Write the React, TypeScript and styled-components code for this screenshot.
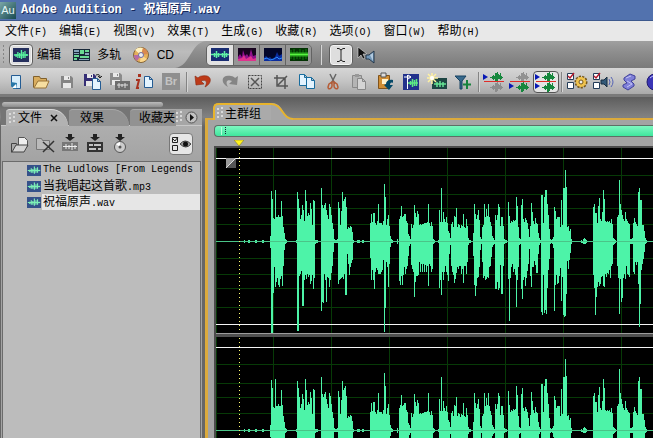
import React from "react";
import styled, { createGlobalStyle, css } from "styled-components";

const Global = createGlobalStyle`
  * { box-sizing: border-box; }
  html, body, #root { height: 100%; }
  body { margin: 0; overflow: hidden; background: #666; }
  body, button { font-family: "Liberation Sans", "Noto Sans CJK SC", sans-serif; font-size: 12px; color: #000; }
  button { border: 0; margin: 0; padding: 0; background: none; }
  svg { display: block; flex: none; }
`;

const Window = styled.div`
  height: 100vh;
  display: flex;
  flex-direction: column;
  overflow: hidden;
`;

const TitleBar = styled.header`
  flex: none;
  height: 21px;
  display: flex;
  align-items: center;
  gap: 5px;
  background: #5272ae;
  border-bottom: 1px solid #3c588d;
`;
const Title = styled.h1`
  margin: 0;
  color: #fff;
  white-space: pre;
  font: bold 12px/18px "Liberation Mono", "Noto Sans CJK SC", monospace;
  text-shadow: 1px 1px 0 #16295c;
`;

const MenuBar = styled.nav`
  flex: none;
  height: 20px;
  display: flex;
  gap: 12px;
  padding-left: 5px;
  background: #e8e8e8;
`;
const MenuButton = styled.button`
  flex: none;
  line-height: 20px;
  white-space: nowrap;
  display: flex;
  align-items: baseline;
`;
const Latin = styled.span`
  font-family: "Liberation Mono", monospace;
  font-size: 10px;
  white-space: pre;
`;

const ModeBar = styled.div`
  flex: none;
  height: 27px;
  display: flex;
  background: linear-gradient(#a0a0a0, #8e8e8e 40%, #7a7a7a);
`;
const Modes = styled.div`
  flex: none;
  display: flex;
  align-items: center;
  gap: 12px;
  padding-left: 2px;
  width: 175px;
  background: linear-gradient(#b2b2b2, #bcbcbc 40%, #a9a9a9);
`;
const ModeButton = styled.button`
  display: flex;
  align-items: center;
  gap: 4px;
  line-height: 22px;
`;
const Framed = styled.span<{ $on?: boolean }>`
  display: flex;
  align-items: center;
  justify-content: center;
  height: 22px;
  width: 24px;
  border-radius: 4px;
  ${(p) => p.$on && css`border: 1px solid #5e5e5e; background: #dedede; box-shadow: inset 0 0 0 1px #f4f4f4;`}
`;
const ModeGrip = styled.span`
  display: flex;
  align-items: center;
  gap: 4px;
`;
const ViewGroup = styled.div`
  flex: none;
  align-self: center;
  height: 22px;
  display: flex;
  border: 1px solid #636363;
  border-radius: 5px;
  overflow: hidden;
`;
const ViewButton = styled.button<{ $on?: boolean }>`
  width: 26px;
  display: flex;
  align-items: center;
  justify-content: center;
  background: ${(p) => (p.$on ? "#e2e2e2" : "#969696")};
  & + & { border-left: 1px solid #636363; }
`;
const Divider = styled.span<{ $w?: number }>`
  flex: none;
  align-self: center;
  width: ${(p) => p.$w ?? 5}px;
  height: 20px;
  background: linear-gradient(90deg, #848484 1px, #d6d6d6 1px 2px, transparent 2px) no-repeat 50% 0 / 2px 100%;
`;
const PointerTools = styled.div`
  display: flex;
  align-items: center;
  gap: 4px;
`;
const PlainButton = styled.button`
  display: flex;
`;

const ToolBar = styled.div`
  flex: none;
  height: 29px;
  display: flex;
  align-items: center;
  padding: 0 0 2px 2px;
  overflow: hidden;
  background: linear-gradient(#d6d6d6, #c4c4c4 45%, #a9a9a9 90%, #7a7a7a 90%);
`;
const Tool = styled.button<{ $on?: boolean }>`
  flex: none;
  width: 26px;
  height: 22px;
  display: flex;
  align-items: center;
  justify-content: center;
  border-radius: 4px;
  border: 1px solid ${(p) => (p.$on ? "#555" : "transparent")};
  background: ${(p) => (p.$on ? "#e4e4e4" : "none")};
`;

const Workspace = styled.div`
  flex: 1;
  min-height: 0;
  display: grid;
  grid-template-columns: 202px 1fr;
  gap: 3px;
  background: linear-gradient(#5d5d5d, #828282 20px, #666 30px);
`;

const SidePanel = styled.aside`
  display: flex;
  flex-direction: column;
  min-height: 0;
  padding: 5px 0 0 1px;
`;
const Scroller = styled.div`
  width: 161px;
  height: 5px;
  flex: none;
  margin-left: 1px;
  border-radius: 3px;
  background: linear-gradient(#bbb, #8c8c8c);
`;
const Tabs = styled.div`
  flex: none;
  display: flex;
  height: 17px;
  margin-top: 2px;
  background: #757575;
  border-bottom: 1px solid #c8c8c8;
`;
const Tab = styled.button<{ $on?: boolean; $last?: boolean; $w: number }>`
  flex: none;
  width: ${(p) => p.$w}px;
  height: 17px;
  display: flex;
  align-items: center;
  gap: 2px;
  padding-left: ${(p) => (p.$on ? 3 : p.$last ? 9 : 11)}px;
  white-space: nowrap;
  line-height: 16px;
  border-top: 1px solid ${(p) => (p.$on ? "#dadada" : "#a8a8a8")};
  border-radius: ${(p) => (p.$last ? "4px 0 0 0" : "4px 18px 0 0")};
  background: ${(p) => (p.$on ? "#b2b2b2" : "#929292")};
  margin-left: ${(p) => (p.$on ? 5 : 1)}px;
`;
const CloseMark = styled.span`
  margin-left: 6px;
  display: flex;
`;
const TabEnd = styled.div`
  flex: 1;
  display: flex;
  align-items: center;
  justify-content: flex-end;
  gap: 2px;
  padding-right: 4px;
  background: #a6a6a6;
`;
const SideBody = styled.div`
  flex: 1;
  min-height: 0;
  display: flex;
  flex-direction: column;
  background: linear-gradient(#aeaeae, #a3a3a3 36px);
  padding: 6px 1px 0 1px;
`;
const FileTools = styled.div`
  flex: none;
  display: flex;
  align-items: center;
  gap: 3px;
  height: 24px;
  padding: 0 8px 0 7px;
  margin-bottom: 5px;
`;
const FileTool = styled.button`
  width: 22px;
  display: flex;
  justify-content: center;
`;
const OptionsButton = styled.button`
  margin-left: auto;
  width: 24px;
  height: 22px;
  display: flex;
  align-items: center;
  justify-content: center;
  border: 1px solid #777;
  border-radius: 4px;
  background: #e6e6e6;
`;
const FileList = styled.ul`
  flex: 1;
  margin: 0;
  padding: 0 0 0 24px;
  list-style: none;
  border: solid #6b6b6b;
  border-width: 1px 1px 0;
  background: #bcbcbc;
  overflow: hidden;
`;
const FileRow = styled.li`
  display: flex;
  align-items: center;
  height: 16px;
  gap: 1px;
`;
const FileName = styled.span<{ $on?: boolean }>`
  flex: 1;
  display: flex;
  align-items: baseline;
  height: 16px;
  line-height: 16px;
  white-space: nowrap;
  overflow: hidden;
  padding-left: 1px;
  background: ${(p) => (p.$on ? "#e6e6e6" : "none")};
`;

const MainPanel = styled.main`
  display: flex;
  flex-direction: column;
  min-width: 0;
  min-height: 0;
  padding-top: 6px;
`;
const MainTabRow = styled.div`
  flex: none;
  display: flex;
  padding-left: 8px;
  height: 17px;
  position: relative;
  z-index: 1;
`;
const MainTab = styled.button`
  height: 17px;
  display: flex;
  align-items: center;
  gap: 1px;
  padding: 0 0 0 2px;
  width: 58px;
  white-space: nowrap;
  border: solid #e8b42c;
  border-width: 2px 0 0 2px;
  border-radius: 5px 0 0 0;
  background: #aaa;
`;
const MainFrame = styled.section`
  flex: 1;
  min-height: 0;
  display: flex;
  flex-direction: column;
  margin-top: -2px;
  border: solid #dbaa3c;
  border-width: 2px 0 0 3px;
  background: #a3a3a3;
  padding: 5px 0 0 6px;
`;
const RangeBar = styled.div`
  flex: none;
  height: 12px;
  border: solid #5e6e66;
  border-width: 1px 0 1px 1px;
  border-radius: 4px 0 0 4px;
  background: linear-gradient(#7df8c0, #3fe69d);
  padding-left: 5px;
`;
const MarkerRow = styled.div`
  flex: none;
  height: 9px;
  padding: 3px 0 0 20px;
`;
const WaveArea = styled.div`
  flex: 1;
  min-height: 0;
  overflow: hidden;
  border: solid #4c4c4c;
  border-width: 2px 0 0 2px;
  background: #000;
`;
const Splitter = styled.div`
  height: 4px;
  border-top: 1px solid #9c9c9c;
  background: #505050;
`;
const ChannelSvg = styled.svg`
  width: 100%;
  height: 185px;
`;

/* Each burst: first column, then "up,down" amplitude for every 1px column. */
const bursts: [number, string][] = [
  [28, "1,1"], [32, "1,1 1,1"], [39, "1,1 1,1"], [46, "1,1 1,1"],
  [54, "5,6 50,92 42,91 23,51 22,25 51,45 24,40 24,36 26,43 24,45 24,37 40,34 25,44 14,24 8,8 2,2 1,1"],
  [80, "1,1 49,89 42,89 33,34 22,32 26,29 36,64 31,64 20,38 51,33 40,37 25,32 28,35 26,33 38,42 32,39 16,33 41,47 40,36 1,2 1,1 1,1"],
  [105, "53,69 36,60 33,61 36,32 38,38 31,60 26,35 22,36 37,45 34,38 26,31 18,24 12,10 2,1 1,1 1,1 2,1 39,42 33,38 16,37 30,36 49,35 40,37 42,32 44,53 34,53 12,12 14,22 13,33 15,25 14,21 9,18 1,1"],
  [141, "1,1 1,1 1,1"], [146, "1,1 1,1"],
  [154, "18,16 27,38 19,28 28,38 28,47 18,30 16,26 20,28 37,32 18,32 18,32 18,30 16,28 20,18 57,90 44,66 16,20 22,25 26,45 15,22 5,5 2,1 1,1"],
  [181, "2,2"],
  [183, "22,39 25,43 35,34 24,43 25,33 27,25 27,32 20,27 18,24 7,14 5,4 2,2 17,23 13,27 16,30 36,55 28,40 24,34 30,34 27,33 16,20 17,30 16,22 17,30 17,22 18,30 18,23 18,30 19,24 37,44 18,22 15,24 19,30 15,27 2,2 1,1"],
  [222, "1,1 31,46 19,38 53,53 19,30 29,38 22,30 19,24 24,30 18,33 10,39 8,12 3,3 17,24 19,30 14,33 25,41 24,37 33,31 14,25 17,27 16,24 13,24 16,32 15,27 27,41 14,24 13,24 22,32 15,20 3,3 1,1 1,1"],
  [257, "8,14 37,43 27,54 22,44 26,36 31,35 21,25 4,8 2,2 14,20 16,36 37,34 24,38 32,37 25,35 37,36 24,25 19,24 15,15 5,5 3,3 1,2 26,47 21,47 26,40 37,48 34,46 15,23 24,52 24,52 15,24 2,2 1,1 1,1"],
  [292, "39,37 25,79 18,36 20,25 19,22 21,30 20,27 21,33 44,65 35,38 14,25 3,3 2,2 36,47 42,57 22,38 19,35 23,44 21,36 18,29 12,22 4,7 15,34 38,45 29,25 20,25 17,19 23,23 18,31 17,31 8,12 3,3 1,1 46,70 46,73 18,33 44,71 51,68 51,72 37,46 26,28 12,17 2,2 1,1 2,2 4,6 34,69 30,43 22,33 24,42 24,41 24,34 14,26 41,59 16,35 53,73 53,75 71,74 54,52 14,19 15,27 10,18 12,11 2,2"],
  [365, "1,1 0,1 2,2 3,2 2,2 1,1"],
  [377, "34,33 37,46 28,73 28,55 18,45 35,40 43,44 22,42 20,35 29,34 51,44 42,45 20,32 19,35 20,31 19,32 20,28 18,36 22,24 17,22 3,3 2,2 1,1 0,0 24,24 26,36 61,72 37,37 31,60 26,56 22,36 20,32 29,37 22,24 20,32 18,33 17,35 2,2 2,2 3,2 18,30 23,32 19,20 17,23 15,20 49,42 53,85 41,62 41,28 16,22 16,17 10,10 3,2 1,1"],
];
const MID = 93;
const wavePath = bursts
  .map(([x, cols]) =>
    cols.split(" ").map((c, i) => {
      const [u, d] = c.split(",").map(Number);
      return `M${x + i} ${MID - u}h1v${u + d + 1}h-1z`;
    }).join(""))
  .join("");
const gridX = Array.from({ length: 40 }, (_, i) => 57 + i * 58);
const gridY = [27, 46, 60, 76, 110, 126, 140, 159];

function Channel({ corner }: { corner?: boolean }) {
  return (
    <ChannelSvg shapeRendering="crispEdges">
      <g fill="#073a07">
        {gridX.map((x) => <rect key={x} x={x} width="1" height="185" />)}
        {gridY.map((y) => <rect key={y} y={y} width="100%" height="1" />)}
        <rect width="1" height="185" />
      </g>
      <rect y="10" width="100%" height="1" fill="#f4f4f4" />
      <rect y="176" width="100%" height="1" fill="#f4f4f4" />
      <path d={wavePath} fill="#4df3a8" />
      <rect y={MID} width="100%" height="1" fill="#4ac488" />
      <path d="M23.5 1V185" stroke="#ffff70" strokeDasharray="1 3" />
      {corner && (
        <g shapeRendering="auto">
          <rect x="10" y="10" width="10" height="10" fill="#555" />
          <path d="M10 20V10h10z" fill="#9b9b9b" />
          <path d="M10 20 20 10" stroke="#ddd" />
        </g>
      )}
    </ChannelSvg>
  );
}

const Dots = () => (
  <svg width="7" height="12" fill="#d9d9d9">
    {[0, 4, 8].map((y) => <path key={y} d={`M0 ${y + 1}h2v2h-2zM4 ${y}h2v2h-2z`} />)}
  </svg>
);

const MiniWave = ({ w = 18, h = 14, c = "#58f29f", bg = "#252f5d" }) => (
  <svg width={w} height={h} viewBox="0 0 18 14" preserveAspectRatio="none">
    <rect width="18" height="14" fill={bg} />
    <path d="M1 7h16M3.500 6v3M5.500 4v6M7.500 5v5M9.500 2v9M11.500 4v6M13.500 3v7M15.500 6v2" stroke={c} strokeWidth="1.500" />
  </svg>
);
const MultiTrack = () => (
  <svg width="17" height="12">
    <path fill="#182838" d="M0 0h17v12H0z" />
    <path fill="#6ad993" d="M7 1h4v4H7zM12 1h4v2h-4zM1 6h5v2H1zM7 7h9v2H7zM1 9h3v2H1z" />
    <path fill="#86a4bb" d="M1 1h5v2H1zM1 4h5v1H1zM12 4h4v2h-4zM6 10h10v1H6z" />
  </svg>
);
const Disc = () => (
  <svg width="16" height="16">
    <circle cx="8" cy="8" r="7.500" fill="#e5b05b" stroke="#81643a" />
    <path d="M8 8 2 3a8 8 0 0 1 8-2z" fill="#fff1bf" />
    <path d="M8 8 14 12a8 8 0 0 1-7 3z" fill="#fbd88e" />
    <path d="M8 8 1 8a7 7 0 0 0 3 6z" fill="#b76ba6" />
    <path d="M8 8 10 1a7 7 0 0 1 5 6z" fill="#d98a4f" />
    <circle cx="8" cy="8" r="2.500" fill="#eee" stroke="#716ca0" />
  </svg>
);
const Zigzags = ({ kind }: { kind: "wave" | "freq" | "pan" | "phase" }) => {
  if (kind === "wave")
    return (
      <svg width="18" height="13"><rect width="18" height="13" fill="#182c72" />
        <path d="M0 6.500h18M3.500 5v4M5.500 3v7M7.500 5v4M11.500 5v4M13.500 3v7M15.500 5v4" stroke="#5ff0a5" strokeWidth="1.500" /></svg>
    );
  if (kind === "freq")
    return (
      <svg width="18" height="13"><rect width="18" height="13" fill="#16031e" />
        <path d="M0 13V9l2-3 2 3 1-7 2 6 2-2 2 3 2-8 2 7 3-1v6z" fill="#8f108c" />
        <path d="M0 13v-2l4-1 2-3 2 4 5-3 2 3 3-1v3z" fill="#e0338e" /></svg>
    );
  if (kind === "pan")
    return (
      <svg width="18" height="13"><rect width="18" height="13" fill="#02062a" />
        <path d="M0 10l2-2 2 2 2-1 2 2 3-2 2-5 2 4 3-2v7H0z" fill="#0b2c9c" />
        <path d="M0 11l3-1 3 2 4-1 3-2 2 2 3-1" stroke="#2b8cff" fill="none" /></svg>
    );
  return (
    <svg width="18" height="13"><rect width="18" height="13" fill="#033303" />
      <path d="M1 2v9M4 1v11M7 3v8M10 1v10M13 2v10M16 1v10" stroke="#0f820f" />
      <path d="M0 6.500h18" stroke="#2fae22" strokeWidth="4" />
      <path d="M0 6.500h18" stroke="#58f440" /></svg>
  );
};
const IBeam = () => (
  <svg width="10" height="16" fill="none" stroke="#222"><path d="M1 1.500h2l2 1.500 2-1.500h2M1 14.500h2l2-1.500 2 1.500h2M5 3v10" /></svg>
);
const Scrub = () => (
  <svg width="18" height="18">
    <path d="M1 1v11l3-3 2 4 2-1-2-4h4z" fill="#111" stroke="#ddd" strokeWidth=".6" />
    <path d="M9 9h3l5-4v12l-5-4H9z" fill="#7397b8" stroke="#24384c" /><path d="M13 9l3-2v8z" fill="#b3cbe0" />
  </svg>
);

const page = (x: number, y: number, stroke = "#245c93", fill = "#e4f4ff") => (
  <path d={`M${x}.5 ${y}.5h5l3 3v8h-8zM${x + 5}.5 ${y}.5v3h3`} fill={fill} stroke={stroke} />
);
const disk = (x: number, y: number, c: string) => (
  <g transform={`translate(${x} ${y})`}><path d="M0 0h10l2 2v10H0z" fill={c} /><path d="M3 0h6v4H3zM2 7h8v5H2z" fill="#e9e9e9" /><path d="M7 1h1v2H7z" fill={c} /></g>
);
const greenWave = (y: number, c: string) => (
  <path d={`M7 ${y + 4}h2v-1h1v-1h1v1h1v-3h2v-1h1v2h1v1h1v-2h1v3h1v1h1v1h-1v1h-1v1h-1v-1h-2v2h-1v1h-2v-3h-1v1h-1v-1H9v-1H7z`} fill={c} />
);
const tri = (y: number) => <path d={`M0 ${y}l5 3-5 3z`} fill="#0718b4" />;
const checks = (
  <g><path d="M1.500 1.500h6v6h-6zM1.500 10.500h6v6h-6z" fill="#fff" stroke="#243c58" /><path d="M2 4l2 2 4-5" stroke="#b51a2d" fill="none" strokeWidth="1.500" /></g>
);

type ToolDef = { name: string; draw?: React.ReactNode; on?: boolean };
const tools: (ToolDef | number)[] = [
  { name: "新建", draw: <><path d="M7.500 3.500h9v13h-7l-2-3z" fill="#d8eefb" stroke="#245c93" /><path d="M7 10l6 1-1 6h-2l-3-3z" fill="#2677a8" /><path d="M8 16l4-4v4z" fill="#fff" /></> },
  { name: "打开", draw: <><path d="M3.500 15.500v-11h6l1 2h6v3" fill="#d9ad5e" stroke="#80602d" /><path d="M4 16l4-7h11l-3 7z" fill="#f6dea0" stroke="#987338" /></> },
  { name: "保存", draw: disk(5, 4, "#858585") },
  { name: "另存为", draw: <>{disk(2, 2, "#362f76")}{page(10, 6)}<path d="M14 3c3-1 4 0 4 2m-2-1l2 2 2-2" stroke="#222" fill="none" /></> },
  { name: "保存全部", draw: <>{disk(2, 1, "#8b8b8b")}<path d="M7 9h15v9H7z" fill="#6d6d6d" /><path d="M9 13h11M11 11v5M14 12v3M17 11v5" stroke="#ddd" /></> },
  { name: "文件信息", draw: <><path d="M4 2h3v3H4z" fill="#a83220" /><path d="M2 8h3l-2 8h2" stroke="#a83220" strokeWidth="2" fill="none" />{page(10, 4)}</> },
  { name: "Br" },
  6,
  { name: "撤消", draw: <path d="M3 4l1 9 8-1-3-3c5-2 7 1 4 6 8-4 7-13-3-11-2 0-3 1-4 2z" fill="#bd3a18" stroke="#8a250d" strokeWidth=".6" /> },
  { name: "重做", draw: <path d="M20 4l-1 9-8-1 3-3c-5-2-7 1-4 6-8-4-7-13 3-11 2 0 3 1 4 2z" fill="#858585" /> },
  { name: "取消选择", draw: <><path d="M4.500 3.500h13v13h-13z" fill="none" stroke="#444" strokeDasharray="2 1" /><path d="M7 6l8 8M15 6l-8 8" stroke="#555" strokeWidth="1.500" /></> },
  { name: "修剪", draw: <path d="M7 3v11h11M4 6h11v11M8 13l9-9" stroke="#555" strokeWidth="1.500" fill="none" /> },
  { name: "复制", draw: <>{page(3, 2, "#186c9e")}{page(10, 5, "#186c9e")}</> },
  { name: "剪切", draw: <><path d="M8 2l5 10M14 2l-5 10" stroke="#666" strokeWidth="1.500" /><path d="M7 12l3-2v4c0 3-4 4-4 1zM15 12l-3-2v4c0 3 4 4 4 1z" fill="none" stroke="#b65b34" strokeWidth="1.500" /></> },
  { name: "粘贴", draw: <><path d="M4.500 3.500h9v12h-9z" fill="#b4b4b4" stroke="#888" /><path d="M7 2h4v3H7z" fill="#999" />{page(9, 6, "#888", "#d4d4d4")}</> },
  { name: "粘贴为新", draw: <><path d="M4.500 3.500h11v13h-11z" fill="#d18e34" stroke="#81531b" /><path d="M7 1h5v4H7z" fill="#ddd" stroke="#555" /><path d="M8 7h6v5H8z" fill="#fff2cc" /><path d="M12 12c0-3 3-5 7-4v3c-2-1-3 0-3 2h3l-4 5-5-5z" fill="#064967" /></> },
  { name: "混合粘贴", draw: <><path d="M3 2h16v16H3z" fill="#22328c" /><path d="M7.500 3v14" stroke="#fff" /><path d="M4 5h7M8 3l3 2-3 2" stroke="#fff" fill="none" /><path d="M8 11h10M10.500 9v4M12.500 7v8M14.500 8v6M16.500 7v7" stroke="#5deb84" strokeWidth="1.500" /></> },
  { name: "新建波形", draw: <><path d="M6 6h15v11H6z" fill="#1d4543" /><path d="M8 12h12M11 10v5M14 9v6M17 10v5" stroke="#65e494" strokeWidth="1.500" /><path d="M6 1v11M1 6h11M2 2l8 8M10 2l-8 8" stroke="#fff1a0" strokeWidth="1.500" /><circle cx="6" cy="6" r="2" fill="#fff" /></> },
  { name: "添加标记", draw: <><path d="M3 4h11l-4 5v8H8V9z" fill="#38698c" stroke="#174363" /><path d="M15 8v9M11 12.500h8" stroke="#17833c" strokeWidth="2" /></> },
  5,
  { name: "编辑左声道", draw: <>{tri(2)}{greenWave(1, "#16873d")}{greenWave(11, "#8c8c8c")}<path d="M1 9.500h20" stroke="#e02c28" /></> },
  { name: "编辑右声道", draw: <>{greenWave(1, "#929292")}{greenWave(11, "#16873d")}{tri(11)}<path d="M1 9.500h20" stroke="#e02c28" /></> },
  { name: "编辑双声道", on: true, draw: <>{tri(2)}{greenWave(1, "#16873d")}{greenWave(11, "#16873d")}{tri(11)}<path d="M1 9.500h20" stroke="#e02c28" /></> },
  5,
  { name: "选项设置", draw: <>{checks}<circle cx="15" cy="10" r="5" fill="#f0c34d" stroke="#765719" strokeDasharray="2 1" strokeWidth="3" /><circle cx="15" cy="10" r="5" fill="#f0c34d" /><circle cx="15" cy="10" r="2" fill="#eee" stroke="#765719" /></> },
  { name: "音频设置", draw: <>{checks}<path d="M9 8h3l3-3v10l-3-3H9z" fill="#345a79" stroke="#172c40" /><path d="M17 7q2 3 0 6M19 5q4 5 0 10" fill="none" stroke="#5563b5" /></> },
  { name: "脚本", draw: <><path d="M6 6l6-4 5 2v3l-4 2 3 3v2l-6 4-5-3v-2l4-2-3-3z" fill="#7f80d8" stroke="#41419a" /><path d="M8 6l5-2M9 9l5 3-5 3" stroke="#c3c3f5" fill="none" /></> },
  { name: "帮助", draw: <><circle cx="11" cy="10" r="8" fill="#3a35b5" stroke="#211b71" /><path d="M6 6q4-4 9-1" stroke="#b8b7ff" fill="none" /></> },
];

const BrBadge = styled.span`
  width: 18px;
  line-height: 17px;
  text-align: center;
  font-weight: bold;
  font-size: 11px;
  color: #c4c4c4;
  background: #8f8f8f;
`;
const AppBadge = styled.span`
  width: 16px;
  height: 17px;
  line-height: 16px;
  text-align: center;
  font-size: 11px;
  color: #e2f5f5;
  background: linear-gradient(135deg, #7aa7a7, #174950);
`;

const menus = [["文件", "F"], ["编辑", "E"], ["视图", "V"], ["效果", "T"], ["生成", "G"], ["收藏", "R"], ["选项", "O"], ["窗口", "W"], ["帮助", "H"]];
const files = [
  { cjk: "", latin: "The Ludlows [From Legends" },
  { cjk: "当我唱起这首歌", latin: ".mp3" },
  { cjk: "祝福原声", latin: ".wav", on: true },
];
const down = <path d="M8 0h4v3h3l-5 4-5-4h3z" fill="#222" />;
const fileTools = [
  { name: "导入文件", art: <><path d="M1.500 18.500v-9h5l1 2h8" fill="#aaa" stroke="#444" /><path d="M8.500 12V3.500h6l3 3V13" fill="#eee" stroke="#555" /><path d="M2 18l4-7h12l-4 7z" fill="#d4d4d4" stroke="#444" /></> },
  { name: "关闭文件", art: <><path d="M1.500 15.500v-11h5l1 2h7v9z" fill="#bababa" stroke="#777" /><path d="M8 8l11 10M19 7L8 18" stroke="#333" strokeWidth="1.500" /></> },
  { name: "插入波形", art: <>{down}<path d="M2 8h16v9H2z" fill="#777" /><path d="M3 12.500h14M6 10v5M9 11v4M12 9v7M15 11v4" stroke="#eee" /></> },
  { name: "插入多轨", art: <>{down}<path d="M2 8h16v10H2z" fill="#333" /><path d="M4 10h4v2H4zM9 10h7v2H9zM4 14h7v2H4zM13 14h3v2h-3z" fill="#c4c4c4" /></> },
  { name: "插入光盘", art: <>{down}<circle cx="10" cy="13" r="5.500" fill="#ccc" stroke="#555" /><path d="M10 13l-4-3 4-2z" fill="#fff" /><circle cx="10" cy="13" r="1.500" fill="#555" /></> },
];

export default function App() {
  return (
    <Window>
      <Global />
      <TitleBar>
        <AppBadge>Au</AppBadge>
        <Title>Adobe Audition - 祝福原声.wav</Title>
      </TitleBar>
      <MenuBar>
        {menus.map(([name, key]) => (
          <MenuButton key={key}>{name}<Latin>({key})</Latin></MenuButton>
        ))}
      </MenuBar>
      <ModeBar>
        <Modes>
          <ModeGrip>
            <svg width="3" height="20"><path d="M1.500 0v20" stroke="#858585" strokeDasharray="2 2" /></svg>
            <ModeButton><Framed $on><MiniWave w={16} /></Framed>编辑</ModeButton>
          </ModeGrip>
          <ModeButton><MultiTrack />&nbsp;多轨</ModeButton>
          <ModeButton><Disc />&nbsp;CD</ModeButton>
        </Modes>
        <svg width="31" height="27">
          <defs><linearGradient id="slope" x2="0" y2="1"><stop stopColor="#b2b2b2" /><stop offset=".4" stopColor="#bcbcbc" /><stop offset="1" stopColor="#a9a9a9" /></linearGradient></defs>
          <path d="M0 0h31C15 2 16 25 0 27z" fill="url(#slope)" />
        </svg>
        <ViewGroup>
          <ViewButton $on aria-label="波形"><Zigzags kind="wave" /></ViewButton>
          <ViewButton aria-label="频谱"><Zigzags kind="freq" /></ViewButton>
          <ViewButton aria-label="声像"><Zigzags kind="pan" /></ViewButton>
          <ViewButton aria-label="相位"><Zigzags kind="phase" /></ViewButton>
        </ViewGroup>
        <Divider $w={17} />
        <PointerTools>
          <PlainButton aria-label="时间选择"><Framed $on><IBeam /></Framed></PlainButton>
          <PlainButton aria-label="刷放"><Scrub /></PlainButton>
        </PointerTools>
      </ModeBar>
      <ToolBar>
        {tools.map((t, i) =>
          typeof t === "number" ? <Divider key={i} $w={t} /> : (
            <Tool key={t.name} $on={t.on} aria-label={t.name}>
              {t.draw ? <svg width="24" height="20" viewBox="-1 0 24 20">{t.draw}</svg> : <BrBadge>Br</BrBadge>}
            </Tool>
          ))}
      </ToolBar>
      <Workspace>
        <SidePanel>
          <Scroller />
          <Tabs>
            <Tab $on $w={62}>
              <Dots /> 文件
              <CloseMark><svg width="8" height="8"><path d="M1 1l6 6M7 1L1 7" stroke="#111" strokeWidth="1.500" /></svg></CloseMark>
            </Tab>
            <Tab $w={60}>效果</Tab>
            <Tab $last $w={46}>收藏夹</Tab>
            <TabEnd>
              <Dots />
              <PlainButton aria-label="面板菜单">
                <svg width="13" height="13"><circle cx="6.500" cy="6.500" r="5.500" fill="#c2c2c2" stroke="#555" /><path d="M5 3l4 3.500L5 10z" fill="#111" /></svg>
              </PlainButton>
            </TabEnd>
          </Tabs>
          <SideBody>
            <FileTools>
              {fileTools.map((f) => (
                <FileTool key={f.name} aria-label={f.name}><svg width="20" height="20">{f.art}</svg></FileTool>
              ))}
              <OptionsButton aria-label="显示选项">
                <svg width="22" height="18" fill="none">
                  <path d="M2.500 2.500h5v5h-5zM2.500 10.500h5v5h-5z" stroke="#222" /><path d="M3 4l2 2 3-4" stroke="#222" />
                  <path d="M10 9q5-6 11 0q-5 6-11 0z" fill="#999" stroke="#444" /><circle cx="15.500" cy="9" r="2.500" fill="#111" />
                </svg>
              </OptionsButton>
            </FileTools>
            <FileList>
              {files.map((f) => (
                <FileRow key={f.latin}>
                  <MiniWave w={14} h={11} bg="#35518a" c="#7df0b6" />
                  <FileName $on={f.on}>{f.cjk}<Latin>{f.latin}</Latin></FileName>
                </FileRow>
              ))}
            </FileList>
          </SideBody>
        </SidePanel>
        <MainPanel>
          <MainTabRow>
            <MainTab><Dots />主群组</MainTab>
            <svg width="22" height="17">
              <path d="M0 0h1c12 0 10 15 19 15h2v2H0z" fill="#a6a6a6" />
              <path d="M0 1c12 0 11 15 22 15" fill="none" stroke="#e8b42c" strokeWidth="2" />
            </svg>
          </MainTabRow>
          <MainFrame>
            <RangeBar><svg width="8" height="10"><path d="M1.500 1v8" stroke="#b2ffda" /><path d="M5.500 1v8" stroke="#123" strokeDasharray="1 1" /></svg></RangeBar>
            <MarkerRow><svg width="10" height="6"><path d="M0 0h10L5 6z" fill="#fff21f" stroke="#77702a" strokeWidth=".5" /></svg></MarkerRow>
            <WaveArea>
              <Channel corner />
              <Splitter />
              <Channel />
            </WaveArea>
          </MainFrame>
        </MainPanel>
      </Workspace>
    </Window>
  );
}
